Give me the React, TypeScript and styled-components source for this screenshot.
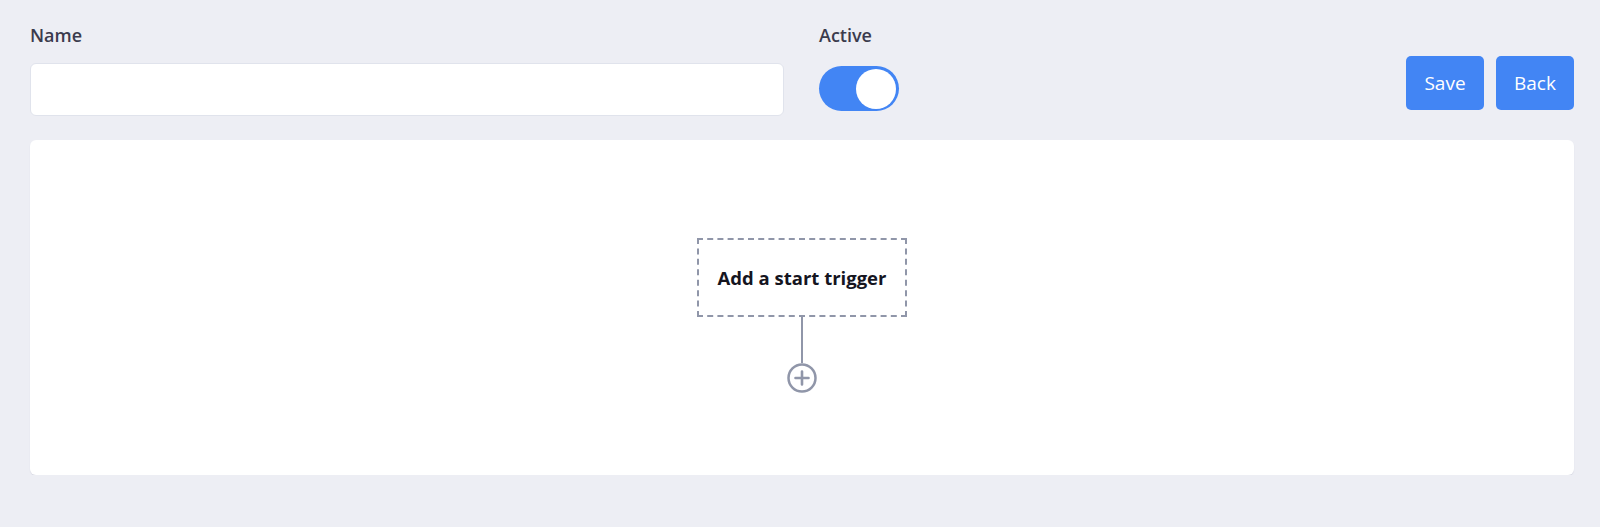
import React from "react";
import styled, { createGlobalStyle } from "styled-components";

const GlobalStyle = createGlobalStyle`
  html, body {
    margin: 0;
    padding: 0;
    background: #edeef4;
    font-family: "Open Sans", Lato, sans-serif;
  }
`;

const Page = styled.div`
  padding: 24px 26px 0 30px;
`;

const Header = styled.div`
  display: flex;
  align-items: flex-start;
`;

const Field = styled.div<{ $width?: number; $offset?: number }>`
  display: flex;
  flex-direction: column;
  width: ${(p) => (p.$width ? `${p.$width}px` : "auto")};
  margin-left: ${(p) => p.$offset || 0}px;
`;

const Label = styled.label`
  font-size: 18px;
  line-height: 22px;
  font-weight: 600;
  color: #3b3b4d;
`;

const TextInput = styled.input`
  box-sizing: border-box;
  margin-top: 17px;
  height: 53px;
  width: 100%;
  border: 1px solid #e0e3ec;
  border-radius: 6px;
  background: #fff;
  outline: none;
`;

const Toggle = styled.div<{ $on: boolean }>`
  box-sizing: border-box;
  margin-top: 20px;
  width: 80px;
  height: 45px;
  border-radius: 23px;
  background: ${(p) => (p.$on ? "#4285f4" : "#c9ccd6")};
  display: flex;
  align-items: center;
  justify-content: ${(p) => (p.$on ? "flex-end" : "flex-start")};
  padding: 0 3px;
`;

const Knob = styled.span`
  width: 40px;
  height: 40px;
  border-radius: 50%;
  background: #fff;
`;

const Actions = styled.div`
  margin-left: auto;
  padding-top: 32px;
  display: flex;
  gap: 12px;
`;

const Button = styled.button`
  height: 54px;
  padding: 0 16px;
  min-width: 78px;
  border: none;
  border-radius: 5px;
  background: #4285f4;
  color: #fff;
  font-family: "Open Sans", Lato, sans-serif;
  font-size: 19px;
  font-weight: 500;
`;

const Canvas = styled.div`
  margin-top: 24px;
  height: 335px;
  background: #fff;
  border-radius: 6px;
  box-shadow: 0 1px 1px rgba(150, 155, 180, 0.25);
  display: flex;
  flex-direction: column;
  align-items: center;
  padding-top: 98px;
  box-sizing: border-box;
`;

const TriggerBox = styled.div`
  box-sizing: border-box;
  width: 210px;
  height: 79px;
  border: 2px dashed #9096a9;
  display: flex;
  align-items: center;
  justify-content: center;
  font-size: 18.5px;
  font-weight: 700;
  color: #15151f;
`;

const Connector = styled.div`
  width: 2px;
  height: 46px;
  background: #9096a9;
`;

const AddIcon = () => (
  <svg width="30" height="30" viewBox="0 0 30 30" fill="none">
    <circle cx="15" cy="15" r="13.5" stroke="#9096a9" strokeWidth="2.5" />
    <path d="M15 8.5v13M8.5 15h13" stroke="#9096a9" strokeWidth="2.6" strokeLinecap="round" />
  </svg>
);

export default function App() {
  return (
    <Page>
      <GlobalStyle />
      <Header>
        <Field $width={754}>
          <Label>Name</Label>
          <TextInput type="text" />
        </Field>
        <Field $offset={35}>
          <Label>Active</Label>
          <Toggle $on>
            <Knob />
          </Toggle>
        </Field>
        <Actions>
          <Button>Save</Button>
          <Button>Back</Button>
        </Actions>
      </Header>
      <Canvas>
        <TriggerBox>Add a start trigger</TriggerBox>
        <Connector />
        <AddIcon />
      </Canvas>
    </Page>
  );
}
